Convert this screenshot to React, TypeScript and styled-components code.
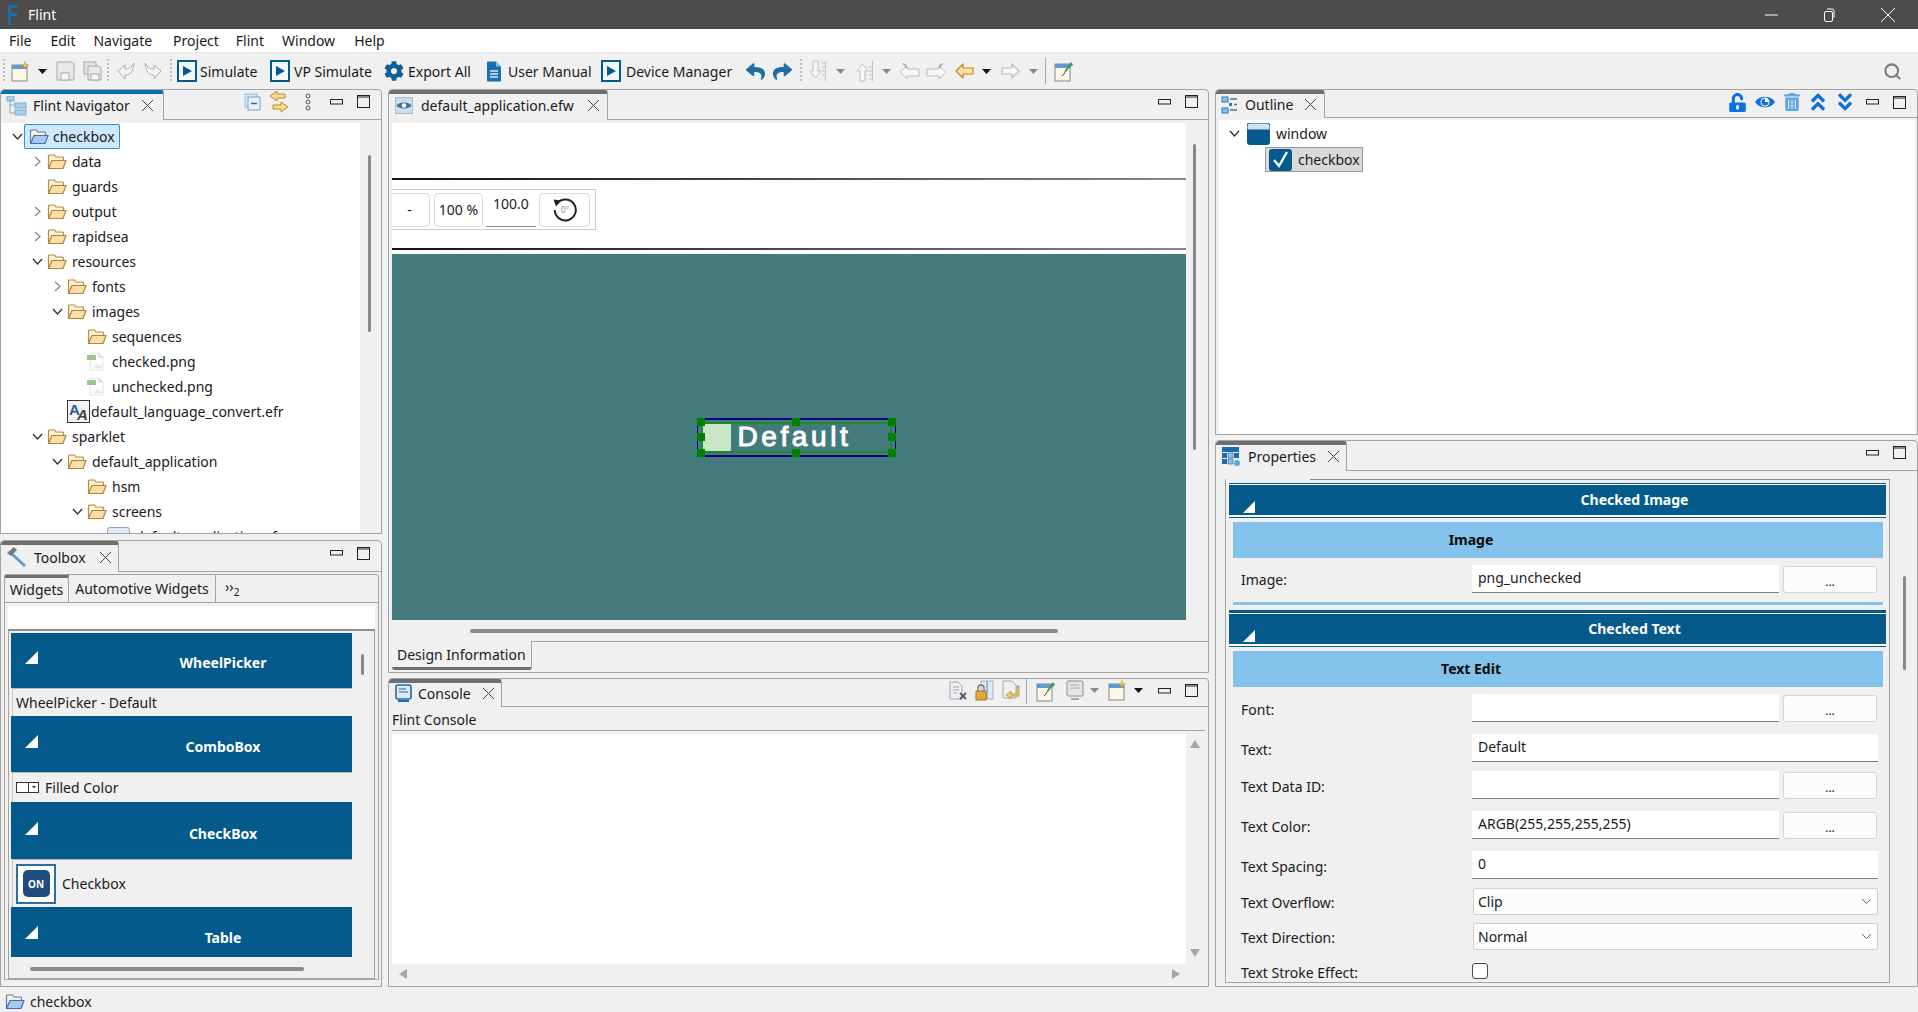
import React from "react";
import styled, { createGlobalStyle } from "styled-components";
import { FaCog, FaReply, FaShare, FaUnlockAlt, FaTrashAlt, FaAngleDoubleUp, FaAngleDoubleDown } from "react-icons/fa";
import { Search } from "lucide-react";

const Global = createGlobalStyle`
  html, body { margin: 0; padding: 0; overflow: hidden; background: #f0f0f0; }
  body { font-family: "Noto Sans", "Open Sans", sans-serif; font-size: 14px; color: #1a1a1a; }
  * { box-sizing: border-box; }
  svg { display: block; flex: none; }
`;

const BLUE = "#055a8c";
const LIGHT = "#83c2ea";
const EDGE = "#a3a3a3";

const Page = styled.div`width: 1918px; height: 1012px; display: flex; flex-direction: column; overflow: hidden;`;
const TitleBar = styled.div`height: 29px; background: #4d4c4b; color: #fff; display: flex; align-items: center; padding-left: 7px;`;
const TitleText = styled.span`margin-left: 9px; font-size: 14px;`;
const WinControls = styled.div`margin-left: auto; display: flex; gap: 45px; padding-right: 23px; align-items: center;`;
const MenuBar = styled.div`height: 24px; background: #fff; display: flex; align-items: center; border-bottom: 1px solid #e8e8e8;`;
const MenuItem = styled.span<{ $ml: number }>`margin-left: ${p => p.$ml}px; font-size: 14px;`;
const Toolbar = styled.div`height: 36px; background: #f0f0f0; display: flex; align-items: center;`;
const Tool = styled.span<{ $ml: number }>`margin-left: ${p => p.$ml}px; display: flex; align-items: center;`;
const ToolText = styled.span<{ $w: number; $ml: number }>`width: ${p => p.$w}px; margin-left: ${p => p.$ml}px; white-space: nowrap; font-size: 14px;`;
const Grip = styled.span<{ $ml: number }>`margin-left: ${p => p.$ml}px; width: 2px; height: 24px; background: repeating-linear-gradient(#bdbdbd 0 2px, transparent 2px 4px);`;
const ToolSep = styled.span<{ $ml: number }>`margin-left: ${p => p.$ml}px; width: 1px; height: 26px; background: #a8a8a8;`;
const SearchSlot = styled.span`margin-left: auto; margin-right: 16px; color: #7a7a7a; display: flex;`;
const Workspace = styled.div`height: 898px; display: flex; gap: 6px;`;
const Column = styled.div<{ $w: number; $gap: number }>`width: ${p => p.$w}px; display: flex; flex-direction: column; gap: ${p => p.$gap}px;`;
const Panel = styled.div<{ $h: number }>`height: ${p => p.$h}px; border: 1px solid ${EDGE}; border-radius: 4px 4px 0 0; display: flex; flex-direction: column; overflow: hidden; background: #f0f0f0;`;
const PanelHead = styled.div<{ $h: number }>`height: ${p => p.$h}px; flex: none; display: flex; border-bottom: 1px solid ${EDGE};`;
const Tab = styled.div<{ $w: number; $active?: boolean; $pad: number }>`
  width: ${p => p.$w}px; height: calc(100% + 1px); background: #f0f0f0; display: flex; align-items: center; padding: 0 0 3px ${p => p.$pad}px;
  border-top: 4px solid ${p => (p.$active ? "#0a6fae" : "#6e6e6e")}; border-right: 1px solid ${EDGE}; border-radius: 3px 3px 0 0; font-size: 14px; white-space: nowrap;
`;
const TabLabel = styled.span<{ $w: number; $ml: number }>`width: ${p => p.$w}px; margin-left: ${p => p.$ml}px;`;
const HeadTools = styled.div<{ $pr: number; $pb?: number }>`margin-left: auto; display: flex; align-items: center; padding-right: ${p => p.$pr}px; padding-bottom: ${p => p.$pb ?? 6}px;`;
const HeadTool = styled.span<{ $ml: number }>`margin-left: ${p => p.$ml}px; display: flex; align-items: center;`;

const NavBody = styled.div`flex: 1; min-height: 0; margin-top: 3px; display: flex;`;
const Tree = styled.div`flex: 1; background: #fff; overflow: hidden; padding-top: 1px;`;
const VScroll = styled.div<{ $w: number; $top: number; $h: number; $left: number }>`
  width: ${p => p.$w}px; flex: none; position: relative; background: #f0f0f0;
  &::after { content: ""; position: absolute; left: ${p => p.$left}px; top: ${p => p.$top}px; width: 3px; height: ${p => p.$h}px; background: #8a8a8a; border-radius: 2px; }
`;
const TreeRow = styled.div<{ $depth: number }>`height: 25px; display: flex; align-items: center; padding-left: ${p => 10 + p.$depth * 20}px; font-size: 14px; white-space: nowrap;`;
const Twist = styled.span`width: 18px; flex: none; display: flex; justify-content: center; padding-right: 5px;`;
const TreeItem = styled.span<{ $sel?: boolean }>`
  display: flex; align-items: center; height: 25px; margin-left: ${p => (p.$sel ? -5 : -7)}px; padding: 0 4px; gap: ${p => (p.$sel ? 4 : 5)}px;
  border: 1px solid ${p => (p.$sel ? "#2d8fd5" : "transparent")}; background: ${p => (p.$sel ? "#cde8ff" : "transparent")};
  border-radius: ${p => (p.$sel ? "2px" : "0")};
`;
const IconSlot = styled.span<{ $shift?: number; $after?: number }>`margin-left: ${p => p.$shift || 0}px; margin-right: ${p => p.$after || 0}px; display: flex;`;

const ToolboxWrap = styled.div`flex: 1; min-height: 0; padding: 2px 2px 6px 3px; display: flex;`;
const Folder = styled.div`flex: 1; border: 1px solid ${EDGE}; border-radius: 3px 3px 0 0; display: flex; flex-direction: column; min-width: 0;`;
const FolderHead = styled.div`height: 28px; flex: none; display: flex; align-items: stretch; border-bottom: 1px solid ${EDGE}; font-size: 14px;`;
const FolderTab = styled.span<{ $w: number; $active?: boolean }>`
  width: ${p => p.$w}px; display: flex; align-items: center; justify-content: center; white-space: nowrap;
  border-right: 1px solid ${EDGE}; ${p => (p.$active ? "border-top: 3px solid #6e6e6e; padding-bottom: 2px;" : "")}
`;
const More = styled.span`margin-left: 9px; align-self: center; font-size: 14px; line-height: 1; display: flex; align-items: flex-start;`;
const MoreSub = styled.span`font-size: 10px; margin-top: 7px;`;
const SearchField = styled.div`height: 25px; flex: none; margin: 3px 3px 0 3px; background: #fff; border-bottom: 2px solid #8f8f8f;`;
const PaletteFrame = styled.div`flex: 1; min-height: 0; margin: 0 3px 0 3px; border: 1px solid ${EDGE}; border-top: none; display: flex; flex-direction: column; padding: 2px 0 0 2px;`;
const PaletteMain = styled.div`height: 324px; flex: none; display: flex;`;
const PaletteList = styled.div`width: 341px; flex: none; display: flex; flex-direction: column;`;
const HScroll = styled.div<{ $ml: number; $w: number; $mt: number }>`margin: ${p => p.$mt}px 0 0 ${p => p.$ml}px; width: ${p => p.$w}px; height: 4px; flex: none; background: #8a8a8a; border-radius: 2px;`;
const PaletteHead = styled.div<{ $h: number; $pt: number }>`
  height: ${p => p.$h}px; flex: none; position: relative; background: ${BLUE}; color: #fff; font-weight: 700; font-size: 14px;
  display: flex; align-items: center; justify-content: center; padding: ${p => p.$pt}px 0 0 83px;
`;
const Tri = styled.span<{ $left: number; $top: number }>`position: absolute; left: ${p => p.$left}px; top: ${p => p.$top}px; width: 0; height: 0; border-style: solid; border-width: 0 0 13px 13px; border-color: transparent transparent #fff transparent;`;
const PaletteItem = styled.div<{ $h: number }>`height: ${p => p.$h}px; flex: none; display: flex; align-items: center; gap: 6px; padding-left: 3px; margin-left: 1px; border-top: 1px solid #b9b9b9; border-left: 1px solid #c9c9c9; font-size: 14px;`;
const OnIcon = styled.span`width: 40px; height: 40px; background: #fff; border: 2px solid #2f6f9c; display: flex; align-items: center; justify-content: center;`;
const OnInner = styled.span`width: 27px; height: 27px; border-radius: 5px; background: #1e4c7e; color: #fff; font-size: 10px; font-weight: 700; display: flex; align-items: center; justify-content: center;`;

const EditorBody = styled.div`flex: 1; min-height: 0; display: flex; flex-direction: column; padding: 3px 0 0 3px;`;
const EditorTop = styled.div`height: 497px; flex: none; display: flex;`;
const Canvas = styled.div`width: 794px; flex: none; background: #fff; display: flex; flex-direction: column;`;
const CanvasBlank = styled.div`height: 55px; flex: none;`;
const DarkRule = styled.div`height: 2px; flex: none; background: linear-gradient(90deg, #111 0%, #555 60%, #888 100%);`;
const ZoomRow = styled.div`height: 68px; flex: none; padding-top: 9px;`;
const ZoomBox = styled.div`width: 204px; height: 41px; border: 1px solid #c9c9c9; border-left: none; display: flex; align-items: center; gap: 3px; overflow: hidden;`;
const ZoomBtn = styled.span<{ $w: number; $ml?: number }>`width: ${p => p.$w}px; margin-left: ${p => p.$ml || 0}px; flex: none; height: 34px; border: 1px solid #dcdcdc; border-radius: 4px; display: flex; align-items: center; justify-content: center; font-size: 14px;`;
const ZoomInput = styled.span`width: 50px; height: 35px; flex: none; border-bottom: 1px solid #8f8f8f; padding: 2px 0 0 7px; font-size: 14px; text-align: left;`;
const Teal = styled.div`flex: 1; margin-top: 4px; background: #437b7c; display: flex; align-items: center; justify-content: center; padding-left: 14px;`;
const WidgetBox = styled.div`position: relative; width: 199px; height: 39px; border: 2px solid #00007e; border-width: 2px 1px; display: flex; align-items: center; padding-left: 4px;`;
const WidgetInner = styled.div`position: absolute; inset: 2px 3px; border: 2px solid #1c8a2c;`;
const WidgetSquare = styled.span`width: 29px; height: 30px; background: #c8e6c5; border-radius: 3px; flex: none;`;
const WidgetText = styled.span`margin-left: 7px; font-family: "Liberation Sans", sans-serif; font-size: 28px; letter-spacing: 3.6px; color: #fff; font-weight: 400; -webkit-text-stroke: 1px #fff; white-space: nowrap;`;
const HandleLayer = styled.div`position: absolute; inset: -2px -1px;`;
const Handle = styled.span<{ $x: number; $y: number }>`position: absolute; left: ${p => p.$x * 50}%; top: ${p => p.$y * 50}%; width: 8px; height: 8px; background: #008000; transform: translate(${p => -p.$x * 50}%, ${p => -p.$y * 50}%);`;
const DesignRow = styled.div`height: 30px; flex: none; margin-top: 8px; display: flex; margin-left: -3px;`;
const DesignTab = styled.span`width: 140px; height: 29px; margin-left: 3px; display: flex; align-items: center; padding-left: 5px; border-right: 1px solid ${EDGE}; border-bottom: 3px solid #6e6e6e; border-radius: 0 0 3px 3px; white-space: nowrap;`;
const DesignFill = styled.span`flex: 1; border-top: 1px solid ${EDGE};`;

const ConsoleTitle = styled.div`height: 24px; flex: none; margin: 0 3px; padding-top: 1px; display: flex; align-items: center; border-bottom: 1px solid ${EDGE}; font-size: 14px;`;
const ConsoleMain = styled.div`height: 230px; flex: none; margin: 3px 0 0 3px; display: flex;`;
const ConsoleWhite = styled.div`width: 794px; flex: none; background: #fff;`;
const ConsoleScroll = styled.div`flex: 1; display: flex; flex-direction: column; align-items: center; justify-content: space-between; padding: 6px 4px 7px 0; color: #9b9b9b; font-size: 9px;`;
const ConsoleH = styled.div`height: 20px; margin: 0 3px; width: 795px; display: flex; align-items: center; justify-content: space-between; padding: 0 7px; color: #9b9b9b;`;
const Arrow = styled.span<{ $dir: string }>`
  width: 0; height: 0; border-style: solid;
  ${p => p.$dir === "up" ? "border-width: 0 5px 8px 5px; border-color: transparent transparent #a6a6a6 transparent;" : ""}
  ${p => p.$dir === "down" ? "border-width: 8px 5px 0 5px; border-color: #a6a6a6 transparent transparent transparent;" : ""}
  ${p => p.$dir === "left" ? "border-width: 5px 8px 5px 0; border-color: transparent #a6a6a6 transparent transparent;" : ""}
  ${p => p.$dir === "right" ? "border-width: 5px 0 5px 8px; border-color: transparent transparent transparent #a6a6a6;" : ""}
`;

const OutlineBody = styled.div`flex: 1; margin: 2px 2px 0 3px; background: #fff; padding-top: 1px;`;
const OutlineRow = styled.div<{ $pl: number; $h: number; $mt?: number }>`height: ${p => p.$h}px; margin-top: ${p => p.$mt || 0}px; display: flex; align-items: center; padding-left: ${p => p.$pl}px; font-size: 14px;`;
const OutlineSel = styled.span`display: flex; align-items: center; gap: 6px; height: 25px; width: 98px; padding-left: 3px; background: #d9d9d9; border: 1px solid #9a9a9a;`;
const OutlineSpacer = styled.span`width: 4px;`;

const PropsBody = styled.div`flex: 1; min-height: 0; display: flex; padding-left: 9px;`;
const PropsFrame = styled.div`width: 665px; flex: none; display: flex; flex-direction: column; border-left: 1px solid ${EDGE}; border-right: 1px solid ${EDGE}; border-bottom: 1px solid ${EDGE}; overflow: hidden; margin-top: 8px; margin-bottom: 3px;`;
const TopTicks = styled.div`margin: -4px 0 0 84px; height: 5px; flex: none; display: flex; border-bottom: 1px solid #8f8f8f;`;
const Tick = styled.span<{ $w: number }>`width: ${p => p.$w}px; height: 100%; border-left: 1px solid #8f8f8f;`;
const BarWrap = styled.div<{ $top: number; $mt: number }>`flex: none; margin: ${p => p.$mt}px 3px 0 3px; border-top: ${p => p.$top}px solid ${BLUE}; border-bottom: 1px solid ${BLUE}; padding: 1px 0 2px; background: #fff;`;
const Bar = styled.div`height: 30px; position: relative; background: ${BLUE}; color: #fff; font-weight: 700; font-size: 14px; display: flex; align-items: center; justify-content: center; padding: 0 0 2px 154px;`;
const BarTri = styled.span`position: absolute; left: 14px; bottom: 2px; width: 0; height: 0; border-style: solid; border-width: 0 0 12px 12px; border-color: transparent transparent #fff transparent;`;
const Sub = styled.div`height: 36px; flex: none; margin: 4px 6px 0 7px; background: ${LIGHT}; color: #0a0a0a; font-weight: 700; font-size: 14px; display: flex; align-items: center; justify-content: center; padding: 0 174px 2px 0;`;
const Stripe = styled.div`height: 3px; flex: none; margin: 9px 6px 0 7px; background: ${LIGHT};`;
const PropRow = styled.div<{ $h: number; $mt: number }>`height: ${p => p.$h}px; margin-top: ${p => p.$mt}px; flex: none; display: flex; align-items: center; padding-left: 15px; font-size: 14px;`;
const PropLabel = styled.span<{ $pt?: number }>`width: 231px; flex: none; padding-top: ${p => p.$pt ?? 2}px;`;
const Field = styled.span<{ $w: number; $pt?: number }>`width: ${p => p.$w}px; height: 100%; flex: none; background: #fff; border-bottom: 1px solid #7f7f7f; padding: ${p => p.$pt ?? 3}px 0 0 6px; white-space: nowrap;`;
const Dots = styled.span`width: 94px; height: 27px; margin-left: 4px; flex: none; background: #fcfcfc; border: 1px solid #d4d4d4; border-radius: 3px; display: flex; justify-content: center; font-size: 12px; padding-top: 6px;`;
const Select = styled.span`width: 405px; height: 100%; margin-left: 1px; flex: none; background: #fcfcfc; border: 1px solid #cfcfcf; border-radius: 2px; display: flex; align-items: center; justify-content: space-between; padding: 0 5px 0 4px;`;
const CheckBoxBox = styled.span`width: 16px; height: 16px; flex: none; border: 1px solid #4a4a4a; border-radius: 3px; background: #fff;`;
const StatusBar = styled.div`height: 25px; display: flex; align-items: center; padding: 3px 0 0 5px; gap: 5px; font-size: 14px; background: #f0f0f0;`;

const FolderIcon = ({ blue }: { blue?: boolean }) => (
  <svg width="20" height="17" viewBox="0 0 20 17">
    <path d="M1.5 15V3a1 1 0 0 1 1-1h5l1.5 2h6.5a1 1 0 0 1 1 1v2" fill="#fdf1d6" stroke={blue ? "#5b7fb8" : "#b88a45"} strokeWidth="1.2" />
    <path d="M1.5 15.5 5 7.5h14l-3 8z" fill={blue ? "#a9c8ee" : "#fbdfa6"} stroke={blue ? "#3f6fc0" : "#b5803a"} strokeWidth="1.2" strokeLinejoin="round" />
  </svg>
);
const PngIcon = () => (
  <svg width="17" height="19" viewBox="0 0 17 19">
    <path d="M3 1h9l4 4v13H3z" fill="#fcfdfb" stroke="#dfe6dc" />
    <path d="M12 1v4h4" fill="#e9efe6" stroke="#cdd8c8" />
    <rect x="0" y="3" width="9" height="5" fill="#9cc48e" />
    <path d="M7 16l3-4 2 2 1-1 2 3z" fill="#dfe9da" />
  </svg>
);
const LangIcon = () => (
  <svg width="23" height="23" viewBox="0 0 23 23">
    <rect x=".5" y=".5" width="22" height="22" fill="#f4f4f4" stroke="#333" />
    <text x="2" y="15" fontFamily="Liberation Sans" fontWeight="700" fontSize="15" fill="#1c5d98">A</text>
    <text x="10" y="20" fontFamily="Liberation Sans" fontWeight="700" fontSize="15" fontStyle="italic" fill="#444">A</text>
  </svg>
);
const ScreenIcon = () => (
  <svg width="23" height="20" viewBox="0 0 23 20">
    <rect x=".5" y=".5" width="22" height="19" rx="2" fill="#dfeaf6" stroke="#7ea7d2" />
  </svg>
);
const ChevR = () => <svg width="8" height="11" viewBox="0 0 8 11"><path d="M1 1l5 4.5L1 10" fill="none" stroke="#8a8a8a" strokeWidth="1.3" /></svg>;
const ChevD = () => <svg width="11" height="8" viewBox="0 0 11 8"><path d="M1 1l4.5 5L10 1" fill="none" stroke="#333" strokeWidth="1.4" /></svg>;
const MinI = () => <svg width="13" height="6" viewBox="0 0 13 6"><rect x=".5" y=".5" width="12" height="4.5" fill="none" stroke="#222" /></svg>;
const MaxI = () => <svg width="13" height="13" viewBox="0 0 13 13"><rect x=".5" y=".5" width="12" height="12" fill="none" stroke="#222" /><path d="M0 2h13" stroke="#222" /></svg>;
const CloseI = () => <svg width="13" height="13" viewBox="0 0 13 13"><path d="M1 1l11 11M12 1L1 12" stroke="#444" strokeWidth="1" /></svg>;
const DropI = ({ c = "#111" }: { c?: string }) => <svg width="9" height="5" viewBox="0 0 9 5"><path d="M0 0h9L4.5 5z" fill={c} /></svg>;
const NewWin = () => (
  <svg width="19" height="21" viewBox="0 0 19 21">
    <rect x="1" y="4" width="15" height="16" fill="#fdf8e6" stroke="#8a8a7a" />
    <rect x="1" y="4" width="15" height="4" fill="#5f9bd0" />
    <path d="M14 0l1 3 3 1-3 1-1 3-1-3-3-1 3-1z" fill="#f3c34a" stroke="#c69a28" strokeWidth=".4" />
  </svg>
);
const SaveI = ({ n = 1 }: { n?: number }) => (
  <svg width="19" height="20" viewBox="0 0 19 20">
    {n > 1 && <rect x="1" y="1" width="12" height="12" fill="#e4e4e4" stroke="#a8a8a8" />}
    <path d={n > 1 ? "M5 5h11l2 2v12H5z" : "M1 1h15l2 2v16H1z"} fill="#e8e8e8" stroke="#a8a8a8" />
    <rect x={n > 1 ? 8 : 5} y={n > 1 ? 13 : 12} width="8" height={n > 1 ? 6 : 7} fill="#f7f7f7" stroke="#a8a8a8" />
  </svg>
);
const GhostArrow = ({ flip }: { flip?: boolean }) => (
  <svg width="21" height="20" viewBox="0 0 21 20" style={flip ? { transform: "scaleX(-1)" } : undefined}>
    <path d="M2 10l7 8v-4c5 0 8-3 9-12-3 5-5 6-9 6V4z" fill="#f5f5f5" stroke="#b0b0b0" />
  </svg>
);
const PlayI = () => (
  <svg width="20" height="24" viewBox="0 0 20 24">
    <rect x="1" y="2" width="18" height="20" fill="#f3f8fc" stroke={BLUE} strokeWidth="2" />
    <path d="M6 7l9 5-9 5z" fill={BLUE} />
  </svg>
);
const DocI = () => (
  <svg width="16" height="21" viewBox="0 0 16 21">
    <path d="M1 1.5A1 1 0 0 1 2 .5h8l5 5v14a1 1 0 0 1-1 1H2a1 1 0 0 1-1-1z" fill="#1970ae" />
    <path d="M4 10h8M4 13h8M4 16h8" stroke="#dbe9f3" strokeWidth="1.4" />
    <path d="M10 .5v5h5" fill="#8fbbdb" />
  </svg>
);
const NavDown = ({ up }: { up?: boolean }) => (
  <svg width="19" height="24" viewBox="0 0 19 24" style={up ? { transform: "scaleY(-1)" } : undefined}>
    <path d="M5 2h5v10h3l-5.500 7L2 12h3z" fill="#f6f6f6" stroke="#c0c0c0" />
    <path d="M14 4h4M14 8h4M14 12h4M14 16h4" stroke="#c4c4c4" />
    <path d="M17.500 2v20" stroke="#c4c4c4" />
  </svg>
);
const StarArrow = ({ flip }: { flip?: boolean }) => (
  <svg width="21" height="18" viewBox="0 0 21 18" style={flip ? { transform: "scaleX(-1)" } : undefined}>
    <path d="M1 10l7-6v3h12v7H8v3z" fill="#f6f6f6" stroke="#bcbcbc" />
    <path d="M4 1l1 2 2-1-1 2 2 1-2 .5" stroke="#9a9a9a" fill="none" />
  </svg>
);
const SideArrow = ({ color, line, flip }: { color: string; line: string; flip?: boolean }) => (
  <svg width="19" height="16" viewBox="0 0 19 16" style={flip ? { transform: "scaleX(-1)" } : undefined}>
    <path d="M1 8l7-7v4h10v6H8v4z" fill={color} stroke={line} strokeWidth="1.2" strokeLinejoin="round" />
  </svg>
);
const PinWin = () => (
  <svg width="20" height="22" viewBox="0 0 20 22">
    <rect x="1" y="4" width="15" height="17" fill="#fdf8e6" stroke="#7f8a8a" />
    <rect x="1" y="4" width="15" height="4" fill="#5f9bd0" />
    <path d="M9 14l3-5 2-3 3-4 2 3-4 3-2 3z" fill="#3f9b49" />
    <path d="M8 16l3-3" stroke="#555" />
  </svg>
);
const TreeLinesI = () => (
  <svg width="17" height="18" viewBox="0 0 17 18">
    <rect x="1" y="1" width="6" height="5" fill="#8fc1e6" stroke="#2d78b0" />
    <rect x="1" y="12" width="6" height="5" fill="#8fc1e6" stroke="#2d78b0" />
    <rect x="8" y="7" width="3" height="3" fill="#2d78b0" />
    <path d="M9 3h7M13 8.500h3M9 14h7" stroke="#5a6d7a" strokeWidth="1.4" />
  </svg>
);
const NavTabI = () => (
  <svg width="22" height="20" viewBox="0 0 22 20">
    <rect x="1" y="0" width="7" height="5" fill="#a9cfe9" stroke="#7daed0" />
    <rect x="9" y="7" width="11" height="5" fill="#a9cfe9" stroke="#7daed0" />
    <rect x="9" y="14" width="11" height="5" fill="#a9cfe9" stroke="#7daed0" />
    <path d="M4 5v12h5M4 9h5" stroke="#8aa7bb" fill="none" />
  </svg>
);
const CollapseI = () => (
  <svg width="17" height="18" viewBox="0 0 17 18">
    <rect x="1" y="1" width="12" height="13" fill="#d7e6f3" stroke="#9bb9d3" />
    <rect x="4" y="4" width="12" height="13" fill="#e6f0f8" stroke="#7ea4c4" />
    <path d="M7 10.500h6" stroke="#2d6c9e" strokeWidth="1.6" />
  </svg>
);
const LinkI = () => (
  <svg width="22" height="24" viewBox="0 0 22 24">
    <path d="M9 1L2 6l7 5V8h8V4H9z" fill="#f9dc8f" stroke="#b98a2c" />
    <path d="M13 12l7 5-7 5v-3H5v-4h8z" fill="#f9dc8f" stroke="#b98a2c" />
  </svg>
);
const DotsI = () => (
  <svg width="6" height="18" viewBox="0 0 6 18">
    <circle cx="3" cy="3" r="2" fill="none" stroke="#555" />
    <circle cx="3" cy="9" r="2" fill="none" stroke="#555" />
    <circle cx="3" cy="15" r="2" fill="none" stroke="#555" />
  </svg>
);
const EyeTab = () => (
  <svg width="18" height="17" viewBox="0 0 18 17">
    <rect x=".5" y=".5" width="17" height="16" fill="#cfdde8" stroke="#a9bccb" />
    <path d="M1.500 8.500C4 4.500 14 4.500 16.500 8.500 14 12.500 4 12.500 1.500 8.500z" fill="#2a74a8" />
    <circle cx="9" cy="8.500" r="2.300" fill="#fff" />
  </svg>
);
const HammerI = () => (
  <svg width="21" height="20" viewBox="0 0 21 20">
    <path d="M7 6l13 12-2 2L5 8z" fill="#5e9ec6" />
    <path d="M1 6l7-6 3 3-6 6z" fill="#7a7a7a" />
  </svg>
);
const ConsoleI = () => (
  <svg width="17" height="19" viewBox="0 0 17 19">
    <rect x="1" y="1" width="15" height="14" rx="2" fill="#dce9f4" stroke="#1f6ba5" strokeWidth="1.6" />
    <path d="M4 5h7M4 8h9" stroke="#1f6ba5" />
    <path d="M3 17h11" stroke="#1f6ba5" strokeWidth="2" />
  </svg>
);
const DocX = () => (
  <svg width="20" height="20" viewBox="0 0 20 20">
    <path d="M2 1h8l4 4v13H2z" fill="#eef1f4" stroke="#a3aab2" />
    <path d="M5 6h6M5 9h6M5 12h4" stroke="#9aa3ab" />
    <path d="M12 12l6 6M18 12l-6 6" stroke="#5c5c5c" strokeWidth="2" />
  </svg>
);
const DocLock = () => (
  <svg width="20" height="21" viewBox="0 0 20 21">
    <path d="M6 1h12v18H6z" fill="#dce8f2" stroke="#9db5c9" />
    <path d="M12 1v18" stroke="#4b89b8" />
    <rect x="1" y="11" width="10" height="9" fill="#e2a93a" stroke="#a5761c" />
    <path d="M3 11V8a3 3 0 0 1 6 0v3" fill="none" stroke="#777" strokeWidth="1.4" />
  </svg>
);
const DocReturn = () => (
  <svg width="18" height="21" viewBox="0 0 18 21">
    <path d="M1 1h9l4 4v13H1z" fill="#eef1f4" stroke="#a3aab2" />
    <path d="M15 6v8H9V11l-5 4 5 4v-3h8V6z" fill="#f2cf6f" stroke="#b38b2e" strokeWidth=".8" />
  </svg>
);
const MonitorI = () => (
  <svg width="18" height="21" viewBox="0 0 18 21">
    <rect x="1" y="1" width="16" height="15" rx="2" fill="#e5e5e5" stroke="#a8a8a8" strokeWidth="1.4" />
    <path d="M4 5h9M4 8h10" stroke="#a8a8a8" />
    <path d="M5 19h8" stroke="#a8a8a8" strokeWidth="2" />
  </svg>
);
const EyeBlue = () => (
  <svg width="20" height="18" viewBox="0 0 20 18">
    <path d="M0 9c4-7 16-7 20 0-4 7-16 7-20 0z" fill="#0f70e0" />
    <circle cx="10" cy="9" r="4.500" fill="#fff" />
    <path d="M10 5.500a3.500 3.500 0 1 0 3.500 3.500H10z" fill="#0f70e0" />
  </svg>
);
const WindowI = () => (
  <svg width="23" height="22" viewBox="0 0 23 22">
    <rect width="23" height="22" rx="3" fill={BLUE} />
    <path d="M0 7V3a3 3 0 0 1 3-3h17a3 3 0 0 1 3 3v4z" fill="#cfe2ef" stroke={BLUE} />
  </svg>
);
const CheckI = () => (
  <svg width="23" height="22" viewBox="0 0 23 22">
    <rect width="23" height="22" rx="3" fill={BLUE} />
    <path d="M5 11l5 6L18 3" fill="none" stroke="#fff" strokeWidth="2.400" />
  </svg>
);
const PropsI = () => (
  <svg width="20" height="21" viewBox="0 0 20 21">
    <rect x="1" y="1" width="17" height="5" fill="#1f6ba5" />
    <rect x="1" y="7" width="5" height="5" fill="#1f6ba5" />
    <rect x="7" y="7" width="5" height="5" fill="#8fc1e6" stroke="#1f6ba5" strokeWidth=".6" />
    <rect x="13" y="7" width="5" height="5" fill="#1f6ba5" />
    <rect x="1" y="13" width="5" height="5" fill="#1f6ba5" />
    <rect x="7" y="13" width="5" height="5" fill="#8fc1e6" stroke="#1f6ba5" strokeWidth=".6" />
    <circle cx="16" cy="17" r="3" fill="#5aa8dd" />
  </svg>
);
const ComboI = () => (
  <svg width="23" height="11" viewBox="0 0 23 11">
    <rect x=".5" y=".5" width="22" height="10" fill="#fff" stroke="#333" />
    <path d="M12.500 0v11" stroke="#333" />
    <path d="M16 4h4l-2 2.500z" fill="#333" />
  </svg>
);
const RotateI = () => (
  <svg width="26" height="26" viewBox="0 0 26 26">
    <path d="M5 6.500A10.500 10.500 0 1 1 2.800 13" fill="none" stroke="#222" strokeWidth="2" />
    <path d="M1.500 2.500 9 3.500 4 9.500z" fill="#222" />
    <text x="13" y="16" fontFamily="Noto Sans" fontSize="8" textAnchor="middle" fill="#8a8a8a">0°</text>
  </svg>
);
const SelChev = () => <svg width="11" height="7" viewBox="0 0 11 7"><path d="M1 1l4.500 4.500L10 1" fill="none" stroke="#666" /></svg>;

type Node = { d: number; t: string; tw?: "r" | "d"; i?: "png" | "lang" | "screen"; sel?: boolean };
const nodes: Node[] = [
  { d: 0, t: "checkbox", tw: "d", sel: true },
  { d: 1, t: "data", tw: "r" }, { d: 1, t: "guards" }, { d: 1, t: "output", tw: "r" }, { d: 1, t: "rapidsea", tw: "r" },
  { d: 1, t: "resources", tw: "d" }, { d: 2, t: "fonts", tw: "r" }, { d: 2, t: "images", tw: "d" },
  { d: 3, t: "sequences" }, { d: 3, t: "checked.png", i: "png" }, { d: 3, t: "unchecked.png", i: "png" },
  { d: 2, t: "default_language_convert.efr", i: "lang" },
  { d: 1, t: "sparklet", tw: "d" }, { d: 2, t: "default_application", tw: "d" }, { d: 3, t: "hsm" }, { d: 3, t: "screens", tw: "d" },
  { d: 4, t: "default_application.efw", i: "screen" },
];

const WinBtns = () => (
  <WinControls>
    <svg width="13" height="2" viewBox="0 0 13 2"><path d="M0 1h13" stroke="#fff" /></svg>
    <svg width="13" height="14" viewBox="0 0 13 14"><rect x="1.500" y="3.500" width="8" height="10" rx="1.500" fill="none" stroke="#fff" /><path d="M4 1h5a2 2 0 0 1 2 2v7" fill="none" stroke="#fff" /></svg>
    <svg width="14" height="14" viewBox="0 0 14 14"><path d="M0 0l14 14M14 0L0 14" stroke="#fff" /></svg>
  </WinControls>
);

const PaneCtl = ({ first = 0 }: { first?: number }) => (
  <>
    <HeadTool $ml={first}><MinI /></HeadTool>
    <HeadTool $ml={14}><MaxI /></HeadTool>
  </>
);

const TreeIcon = ({ n }: { n: Node }) => {
  if (n.i === "png") return <IconSlot $after={3}><PngIcon /></IconSlot>;
  if (n.i === "lang") return <IconSlot $after={-4}><LangIcon /></IconSlot>;
  if (n.i === "screen") return <IconSlot><ScreenIcon /></IconSlot>;
  return <FolderIcon blue={n.sel} />;
};

export default function App() {
  return (
    <Page>
      <Global />
      <TitleBar>
        <svg width="12" height="22" viewBox="0 0 12 22"><path d="M1 1h10v3H4v5h6v3H4v9H1z" fill="#1b6ea5" /></svg>
        <TitleText>Flint</TitleText>
        <WinBtns />
      </TitleBar>
      <MenuBar>
        <MenuItem $ml={9}>File</MenuItem>
        <MenuItem $ml={19}>Edit</MenuItem>
        <MenuItem $ml={18}>Navigate</MenuItem>
        <MenuItem $ml={21}>Project</MenuItem>
        <MenuItem $ml={17}>Flint</MenuItem>
        <MenuItem $ml={18}>Window</MenuItem>
        <MenuItem $ml={19}>Help</MenuItem>
      </MenuBar>
      <Toolbar>
        <Grip $ml={3} />
        <Tool $ml={6}><NewWin /></Tool>
        <Tool $ml={8}><DropI /></Tool>
        <Tool $ml={9}><SaveI /></Tool>
        <Tool $ml={8}><SaveI n={2} /></Tool>
        <Grip $ml={5} />
        <Tool $ml={7}><GhostArrow /></Tool>
        <Tool $ml={5}><GhostArrow flip /></Tool>
        <Grip $ml={7} />
        <Tool $ml={5}><PlayI /></Tool>
        <ToolText $ml={3} $w={58}>Simulate</ToolText>
        <Tool $ml={12}><PlayI /></Tool>
        <ToolText $ml={4} $w={78}>VP Simulate</ToolText>
        <Tool $ml={12}><FaCog size={20} color="#0d5f95" /></Tool>
        <ToolText $ml={4} $w={64}>Export All</ToolText>
        <Tool $ml={14}><DocI /></Tool>
        <ToolText $ml={6} $w={82}>User Manual</ToolText>
        <Tool $ml={11}><PlayI /></Tool>
        <ToolText $ml={5} $w={107}>Device Manager</ToolText>
        <Tool $ml={13}><FaReply size={19} color="#1c6ea4" /></Tool>
        <Tool $ml={8}><FaShare size={19} color="#1c6ea4" /></Tool>
        <Grip $ml={8} />
        <Tool $ml={6}><NavDown /></Tool>
        <Tool $ml={9}><DropI c="#8a8a8a" /></Tool>
        <Tool $ml={10}><NavDown up /></Tool>
        <Tool $ml={8}><DropI c="#8a8a8a" /></Tool>
        <Tool $ml={8}><StarArrow /></Tool>
        <Tool $ml={6}><StarArrow flip /></Tool>
        <Tool $ml={8}><SideArrow color="#fce3a0" line="#c08a22" /></Tool>
        <Tool $ml={8}><DropI /></Tool>
        <Tool $ml={10}><SideArrow color="#f6f6f6" line="#bcbcbc" flip /></Tool>
        <Tool $ml={9}><DropI c="#8a8a8a" /></Tool>
        <ToolSep $ml={7} />
        <Tool $ml={8}><PinWin /></Tool>
        <SearchSlot><Search size={19} strokeWidth={2.6} /></SearchSlot>
      </Toolbar>
      <Workspace>
        <Column $w={382} $gap={6}>
          <Panel $h={445}>
            <PanelHead $h={30}>
              <Tab $w={163} $active $pad={5}>
                <NavTabI />
                <TabLabel $w={98} $ml={5}>Flint Navigator</TabLabel>
                <HeadTool $ml={10}><CloseI /></HeadTool>
              </Tab>
              <HeadTools $pr={11}>
                <HeadTool $ml={0}><CollapseI /></HeadTool>
                <HeadTool $ml={7}><LinkI /></HeadTool>
                <HeadTool $ml={15}><DotsI /></HeadTool>
                <PaneCtl first={19} />
              </HeadTools>
            </PanelHead>
            <NavBody>
              <Tree>
                {nodes.map(n => (
                  <TreeRow key={n.t} $depth={n.d}>
                    <Twist>{n.tw === "r" ? <ChevR /> : n.tw === "d" ? <ChevD /> : null}</Twist>
                    <TreeItem $sel={n.sel}>
                      <TreeIcon n={n} />
                      <span>{n.t}</span>
                    </TreeItem>
                  </TreeRow>
                ))}
              </Tree>
              <VScroll $w={21} $left={8} $top={32} $h={177} />
            </NavBody>
          </Panel>
          <Panel $h={447}>
            <PanelHead $h={31}>
              <Tab $w={118} $pad={5}>
                <HammerI />
                <TabLabel $w={54} $ml={7}>Toolbox</TabLabel>
                <HeadTool $ml={11}><CloseI /></HeadTool>
              </Tab>
              <HeadTools $pr={11}><PaneCtl /></HeadTools>
            </PanelHead>
            <ToolboxWrap>
              <Folder>
                <FolderHead>
                  <FolderTab $w={64} $active>Widgets</FolderTab>
                  <FolderTab $w={147}>Automotive Widgets</FolderTab>
                  <More>››<MoreSub>2</MoreSub></More>
                </FolderHead>
                <SearchField />
                <PaletteFrame>
                  <PaletteMain>
                    <PaletteList>
                      <PaletteHead $h={55} $pt={4}><Tri $left={14} $top={18} />WheelPicker</PaletteHead>
                      <PaletteItem $h={28}>WheelPicker - Default</PaletteItem>
                      <PaletteHead $h={56} $pt={4}><Tri $left={14} $top={19} />ComboBox</PaletteHead>
                      <PaletteItem $h={30}><ComboI />Filled Color</PaletteItem>
                      <PaletteHead $h={57} $pt={6}><Tri $left={14} $top={20} />CheckBox</PaletteHead>
                      <PaletteItem $h={48}><OnIcon><OnInner>ON</OnInner></OnIcon>Checkbox</PaletteItem>
                      <PaletteHead $h={50} $pt={10}><Tri $left={14} $top={19} />Table</PaletteHead>
                    </PaletteList>
                    <VScroll $w={19} $left={9} $top={21} $h={21} />
                  </PaletteMain>
                  <HScroll $ml={19} $w={274} $mt={10} />
                </PaletteFrame>
              </Folder>
            </ToolboxWrap>
          </Panel>
        </Column>
        <Column $w={821} $gap={5}>
          <Panel $h={584}>
            <PanelHead $h={30}>
              <Tab $w={219} $pad={6}>
                <EyeTab />
                <TabLabel $w={155} $ml={8}>default_application.efw</TabLabel>
                <HeadTool $ml={11}><CloseI /></HeadTool>
              </Tab>
              <HeadTools $pr={10}><PaneCtl /></HeadTools>
            </PanelHead>
            <EditorBody>
              <EditorTop>
                <Canvas>
                  <CanvasBlank />
                  <DarkRule />
                  <ZoomRow>
                    <ZoomBox>
                      <ZoomBtn $w={41} $ml={-3}>-</ZoomBtn>
                      <ZoomBtn $w={49} $ml={1}>100 %</ZoomBtn>
                      <ZoomInput>100.0</ZoomInput>
                      <ZoomBtn $w={51}><RotateI /></ZoomBtn>
                    </ZoomBox>
                  </ZoomRow>
                  <DarkRule />
                  <Teal>
                    <WidgetBox>
                      <WidgetInner />
                      <WidgetSquare />
                      <WidgetText>Default</WidgetText>
                      <HandleLayer>
                        {[[0,0],[1,0],[2,0],[0,1],[2,1],[0,2],[1,2],[2,2]].map(([x, y]) => <Handle key={`${x}${y}`} $x={x} $y={y} />)}
                      </HandleLayer>
                    </WidgetBox>
                  </Teal>
                </Canvas>
                <VScroll $w={18} $left={7} $top={21} $h={306} />
              </EditorTop>
              <HScroll $ml={78} $w={588} $mt={9} />
              <DesignRow>
                <DesignTab>Design Information</DesignTab>
                <DesignFill />
              </DesignRow>
            </EditorBody>
          </Panel>
          <Panel $h={309}>
            <PanelHead $h={28}>
              <Tab $w={113} $pad={6}>
                <ConsoleI />
                <TabLabel $w={54} $ml={6}>Console</TabLabel>
                <HeadTool $ml={10}><CloseI /></HeadTool>
              </Tab>
              <HeadTools $pr={10} $pb={4}>
                <HeadTool $ml={0}><DocX /></HeadTool>
                <HeadTool $ml={7}><DocLock /></HeadTool>
                <HeadTool $ml={7}><DocReturn /></HeadTool>
                <ToolSep $ml={6} />
                <HeadTool $ml={9}><PinWin /></HeadTool>
                <HeadTool $ml={10}><MonitorI /></HeadTool>
                <HeadTool $ml={6}><DropI c="#8a8a8a" /></HeadTool>
                <HeadTool $ml={9}><NewWin /></HeadTool>
                <HeadTool $ml={7}><DropI /></HeadTool>
                <PaneCtl first={15} />
              </HeadTools>
            </PanelHead>
            <ConsoleTitle>Flint Console</ConsoleTitle>
            <ConsoleMain>
              <ConsoleWhite />
              <ConsoleScroll><Arrow $dir="up" /><Arrow $dir="down" /></ConsoleScroll>
            </ConsoleMain>
            <ConsoleH><Arrow $dir="left" /><Arrow $dir="right" /></ConsoleH>
          </Panel>
        </Column>
        <Column $w={703} $gap={5}>
          <Panel $h={346}>
            <PanelHead $h={28}>
              <Tab $w={109} $pad={5}>
                <TreeLinesI />
                <TabLabel $w={48} $ml={7}>Outline</TabLabel>
                <HeadTool $ml={11}><CloseI /></HeadTool>
              </Tab>
              <HeadTools $pr={11} $pb={3}>
                <HeadTool $ml={0}><FaUnlockAlt size={19} color="#0f70e0" /></HeadTool>
                <HeadTool $ml={8}><EyeBlue /></HeadTool>
                <HeadTool $ml={8}><FaTrashAlt size={18} color="#5fa3ea" /></HeadTool>
                <HeadTool $ml={6}><FaAngleDoubleUp size={22} color="#0f70e0" /></HeadTool>
                <HeadTool $ml={5}><FaAngleDoubleDown size={22} color="#0f70e0" /></HeadTool>
                <PaneCtl first={10} />
              </HeadTools>
            </PanelHead>
            <OutlineBody>
              <OutlineRow $pl={10} $h={25}>
                <ChevD />
                <OutlineSpacer />
                <IconSlot $shift={3}><WindowI /></IconSlot>
                <TabLabel $w={70} $ml={6}>window</TabLabel>
              </OutlineRow>
              <OutlineRow $pl={46} $h={25} $mt={1}>
                <OutlineSel><CheckI />checkbox</OutlineSel>
              </OutlineRow>
            </OutlineBody>
          </Panel>
          <Panel $h={547}>
            <PanelHead $h={30}>
              <Tab $w={131} $pad={5}>
                <PropsI />
                <TabLabel $w={68} $ml={7}>Properties</TabLabel>
                <HeadTool $ml={11}><CloseI /></HeadTool>
              </Tab>
              <HeadTools $pr={11}><PaneCtl /></HeadTools>
            </PanelHead>
            <PropsBody>
              <PropsFrame>
                <TopTicks><Tick $w={77} /><Tick $w={53} /><Tick $w={100} /><Tick $w={349} /></TopTicks>
                <BarWrap $top={1} $mt={3}><Bar><BarTri />Checked Image</Bar></BarWrap>
                <Sub>Image</Sub>
                <PropRow $h={28} $mt={7}>
                  <PropLabel $pt={0}>Image:</PropLabel>
                  <Field $w={307}>png_unchecked</Field>
                  <Dots>...</Dots>
                </PropRow>
                <Stripe />
                <BarWrap $top={3} $mt={5}><Bar><BarTri />Checked Text</Bar></BarWrap>
                <Sub>Text Edit</Sub>
                <PropRow $h={28} $mt={7}><PropLabel>Font:</PropLabel><Field $w={307} /><Dots>...</Dots></PropRow>
                <PropRow $h={28} $mt={12}><PropLabel>Text:</PropLabel><Field $w={406}>Default</Field></PropRow>
                <PropRow $h={28} $mt={9}><PropLabel>Text Data ID:</PropLabel><Field $w={307} /><Dots>...</Dots></PropRow>
                <PropRow $h={28} $mt={12}><PropLabel>Text Color:</PropLabel><Field $w={307}>ARGB(255,255,255,255)</Field><Dots>...</Dots></PropRow>
                <PropRow $h={28} $mt={12}><PropLabel>Text Spacing:</PropLabel><Field $w={406}>0</Field></PropRow>
                <PropRow $h={27} $mt={9}><PropLabel>Text Overflow:</PropLabel><Select>Clip<SelChev /></Select></PropRow>
                <PropRow $h={27} $mt={8}><PropLabel>Text Direction:</PropLabel><Select>Normal<SelChev /></Select></PropRow>
                <PropRow $h={16} $mt={13}><PropLabel>Text Stroke Effect:</PropLabel><CheckBoxBox /></PropRow>
              </PropsFrame>
              <VScroll $w={28} $left={13} $top={105} $h={94} />
            </PropsBody>
          </Panel>
        </Column>
      </Workspace>
      <StatusBar><FolderIcon blue />checkbox</StatusBar>
    </Page>
  );
}
